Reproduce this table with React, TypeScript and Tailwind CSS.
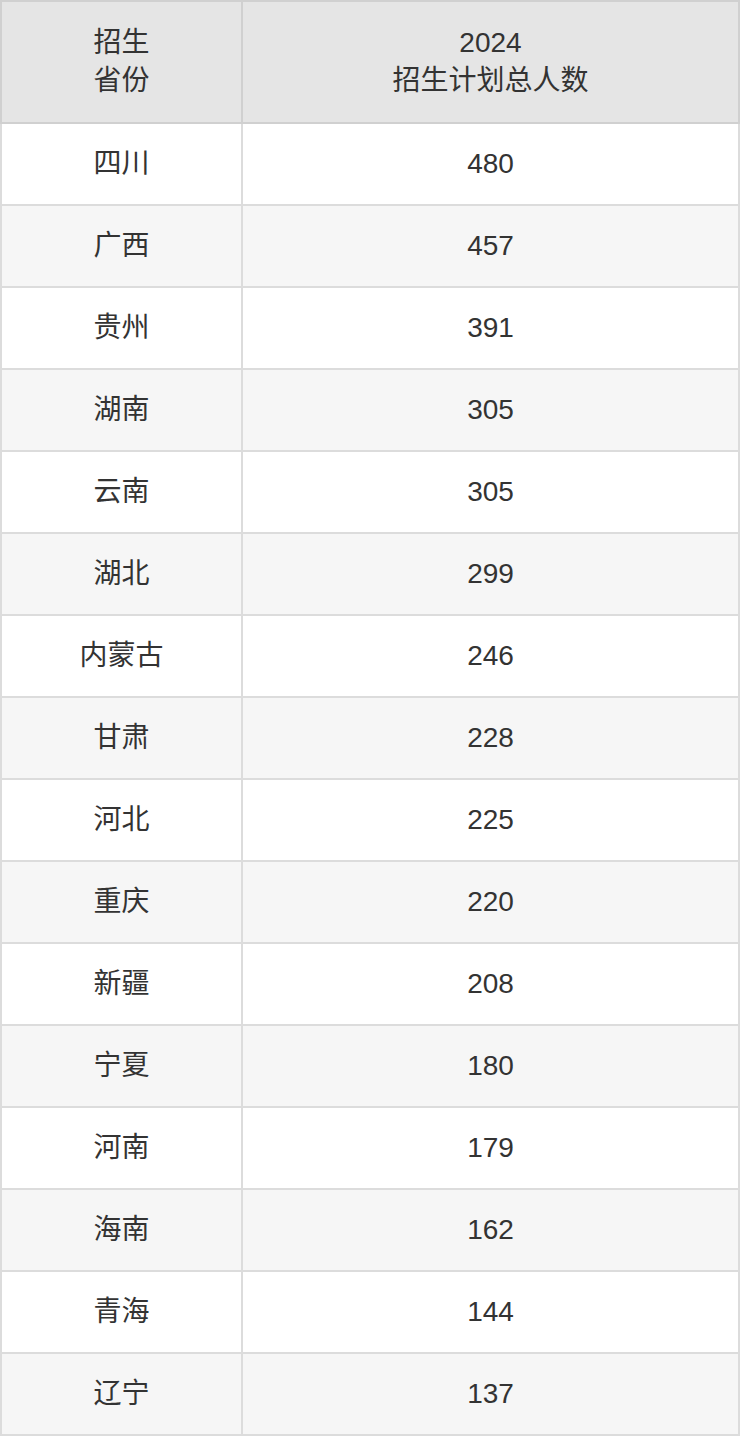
import React from 'react';

const rows: [string, number][] = [
  ['四川', 480],
  ['广西', 457],
  ['贵州', 391],
  ['湖南', 305],
  ['云南', 305],
  ['湖北', 299],
  ['内蒙古', 246],
  ['甘肃', 228],
  ['河北', 225],
  ['重庆', 220],
  ['新疆', 208],
  ['宁夏', 180],
  ['河南', 179],
  ['海南', 162],
  ['青海', 144],
  ['辽宁', 137],
];

const App: React.FC = () => {
  return (
    <div
      className="w-[740px] bg-white text-[#333] text-[28px]"
      style={{ fontFamily: '"Liberation Sans", "Noto Sans CJK SC", sans-serif' }}
    >
      {/* Header */}
      <div className="flex h-[124px] bg-[#e5e5e5] border-2 border-[#d0d0d0]">
        <div className="w-[241px] flex flex-col items-center justify-center leading-[38px] border-r-2 border-[#d0d0d0]">
          <span>招生</span>
          <span>省份</span>
        </div>
        <div className="flex-1 flex flex-col items-center justify-center leading-[38px]">
          <span>2024</span>
          <span>招生计划总人数</span>
        </div>
      </div>

      {/* Body */}
      {rows.map(([name, num], i) => (
        <div
          key={name}
          className={`flex h-[82px] border-x-2 border-b-2 border-[#dcdcdc] ${i % 2 === 1 ? 'bg-[#f6f6f6]' : 'bg-white'}`}
        >
          <div className="w-[241px] flex items-center justify-center border-r-2 border-[#dcdcdc]">
            {name}
          </div>
          <div className="flex-1 flex items-center justify-center">{num}</div>
        </div>
      ))}
    </div>
  );
};

export default App;
